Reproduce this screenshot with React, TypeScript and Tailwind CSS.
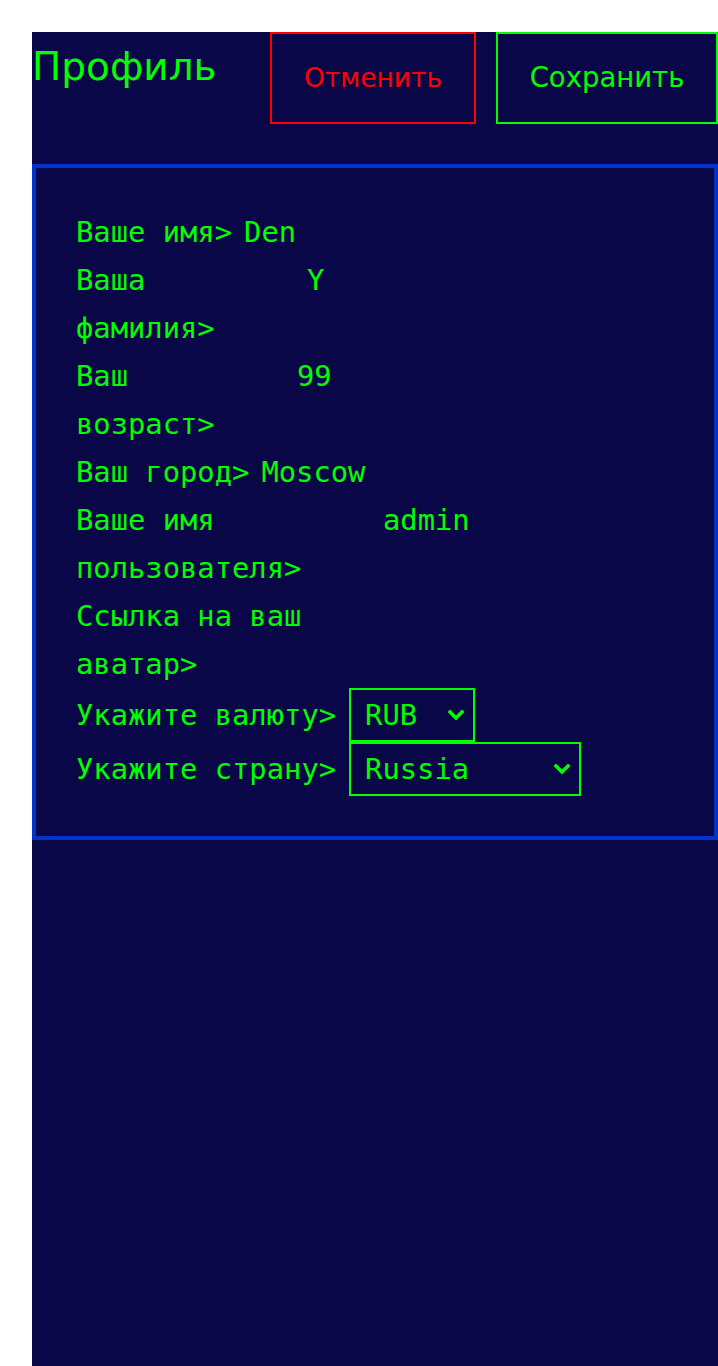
import { useState } from "react";

const mono = "font-['DejaVu_Sans_Mono',monospace]";

function Chevron() {
  return (
    <svg
      className="pointer-events-none absolute right-[10px] top-1/2 -translate-y-1/2"
      width="18"
      height="12"
      viewBox="0 0 18 12"
      fill="none"
    >
      <polyline
        points="3,3 9,9 15,3"
        stroke="#00ff00"
        strokeWidth="3.5"
        strokeLinecap="square"
      />
    </svg>
  );
}

function ProfilePage() {
  const [form, setForm] = useState({
    currency: "RUB",
    country: "Russia",
  }); //selects state.

  const handleChange = (e: React.ChangeEvent<HTMLSelectElement>) => {
    setForm({ ...form, [e.target.name]: e.target.value });
  };

  return (
    <div className="bg-white pl-8 pt-8">
      <div className="w-[686px] h-[1334px] bg-[#0a0748]">
        <div className="flex justify-between items-start">
          <h1 className="font-['DejaVu_Sans',sans-serif] text-[39px] leading-[70px] text-[#00ff00]">
            Профиль
          </h1>
          <div className="flex gap-5">
            <button className="w-[206px] h-[92px] border-2 border-[#ff0000] text-[#ff0000] font-['DejaVu_Sans',sans-serif] text-[26.5px]">
              Отменить
            </button>
            <button className="w-[222px] h-[92px] border-2 border-[#00ff00] text-[#00ff00] font-['DejaVu_Sans',sans-serif] text-[27.5px]">
              Сохранить
            </button>
          </div>
        </div>

        <div
          className={`mt-10 border-4 border-[#0033cc] p-10 text-[28.8px] leading-[48px] text-[#00ff00] ${mono}`}
        >
          <div className="flex">
            <span>Ваше имя&gt;</span>
            <span className="ml-3">Den</span>
          </div>
          <div className="flex">
            <span className="w-[219px]">Ваша фамилия&gt;</span>
            <span className="ml-3">Y</span>
          </div>
          <div className="flex">
            <span className="w-[200px]">Ваш возраст&gt;</span>
            <span className="ml-[21px]">99</span>
          </div>
          <div className="flex">
            <span>Ваш город&gt;</span>
            <span className="ml-3">Moscow</span>
          </div>
          <div className="flex">
            <span className="w-[295px]">Ваше имя пользователя&gt;</span>
            <span className="ml-3">admin</span>
          </div>
          <div className="flex">
            <span className="w-[295px]">Ссылка на ваш аватар&gt;</span>
            <span className="ml-3"></span>
          </div>
          <div className="flex items-center">
            <span>Укажите валюту&gt;</span>
            <div className="relative ml-[13px]">
              <select
                name="currency"
                value={form.currency}
                onChange={handleChange}
                className="appearance-none w-[126px] h-[54px] pl-[14px] border-2 border-[#00ff00] bg-[#0a0748] text-[#00ff00] outline-none"
              >
                <option>RUB</option>
                <option>USD</option>
                <option>EUR</option>
              </select>
              <Chevron />
            </div>
          </div>
          <div className="flex items-center">
            <span>Укажите страну&gt;</span>
            <div className="relative ml-[13px]">
              <select
                name="country"
                value={form.country}
                onChange={handleChange}
                className="appearance-none w-[232px] h-[54px] pl-[14px] border-2 border-[#00ff00] bg-[#0a0748] text-[#00ff00] outline-none"
              >
                <option>Russia</option>
                <option>Belarus</option>
                <option>Kazakhstan</option>
              </select>
              <Chevron />
            </div>
          </div>
        </div>
      </div>
    </div>
  );
}

export default ProfilePage;
